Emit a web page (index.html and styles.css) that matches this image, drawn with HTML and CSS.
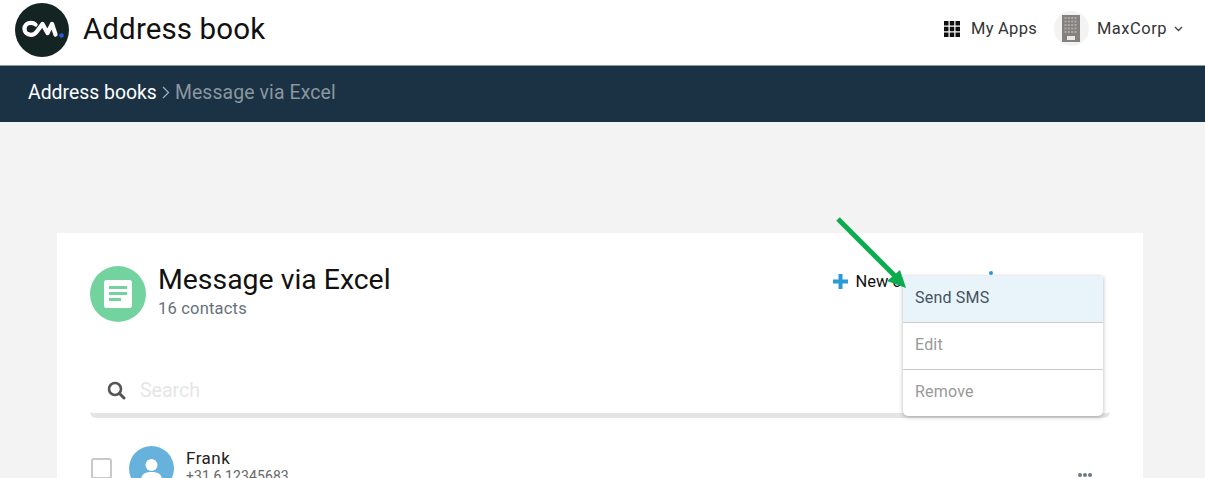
FILE: index.html
```html
<!DOCTYPE html>
<html>
<head>
    <meta charset="UTF-8">
    <title>Address book</title>
    <link rel="stylesheet" href="styles.css">
</head>
<body>
    <header class="topbar">
        <div class="brand">
            <svg class="logo" width="54" height="54" viewBox="0 0 54 54" role="img" aria-label="CM">
                <circle cx="27" cy="27" r="27" fill="#142423"/>
                <path fill="none" stroke="#fff" stroke-width="4.300" stroke-linecap="round" stroke-linejoin="round" d="M20.500 21.500C19 20.200 17.800 19.800 16 19.800 12 19.800 9.500 22.500 9.500 25.800S12 31.800 16 31.800C18 31.800 20 31 21.500 29L27.500 21 32.500 30 37 21 40.500 31.500"/>
                <circle cx="46.500" cy="32.500" r="2.300" fill="#2a5bd7"/>
            </svg>
            <h1 class="app_name">Address book</h1>
        </div>
        <div class="top_right">
            <a class="apps" href="#">
                <svg class="apps_icon" width="16" height="16" viewBox="0 0 16 16">
                    <path fill="#111" d="M0 0h4.500v4.500H0zM5.750 0h4.500v4.500h-4.500zM11.500 0H16v4.500h-4.500zM0 5.750h4.500v4.500H0zM5.750 5.750h4.500v4.500h-4.500zM11.500 5.750H16v4.500h-4.500zM0 11.500h4.500V16H0zM5.750 11.500h4.500V16h-4.500zM11.500 11.500H16V16h-4.500z"/>
                </svg>
                My Apps
            </a>
            <div class="account">
                <div class="account_pic">
                    <svg width="18" height="27" viewBox="0 0 18 27">
                        <rect width="18" height="27" fill="#85817e"/>
                        <path stroke="#aeaba9" stroke-width="2" stroke-dasharray="2 1.330" d="M2.500 3h13M2.500 6.500h13M2.500 10h13M2.500 13.500h13M2.500 17h13"/>
                        <rect x="5" y="21" width="8" height="4" fill="#e8e8e8"/>
                    </svg>
                </div>
                <span>MaxCorp</span>
                <svg class="caret" width="9" height="6" viewBox="0 0 9 6">
                    <path fill="none" stroke="#444" stroke-width="1.400" d="M1 1l3.500 3.500L8 1"/>
                </svg>
            </div>
        </div>
    </header>

    <nav class="crumbs">
        <a href="#">Address books</a>
        <svg class="crumb_sep" width="8" height="13" viewBox="0 0 8 13">
            <path fill="none" stroke="#a3adb4" stroke-width="1.300" d="M1 1l5.500 5.500L1 12"/>
        </svg>
        <span>Message via Excel</span>
    </nav>

    <main class="page">
        <section class="card">
            <div class="card_head">
                <div class="list_icon">
                    <svg width="28" height="28" viewBox="0 0 28 28">
                        <rect width="28" height="28" rx="2.500" fill="#fff"/>
                        <path fill="#72d39e" d="M5 6h18v3H5zM5 12h18v3H5zM5 18h12v3H5z"/>
                    </svg>
                </div>
                <div class="list_title">
                    <h2>Message via Excel</h2>
                    <p>16 contacts</p>
                </div>
                <div class="card_actions">
                    <a class="new_btn" href="#">
                        <svg width="15" height="15" viewBox="0 0 15 15">
                            <path fill="#2b9ad9" d="M5.500 0h4v5.500H15v4H9.500V15h-4V9.500H0v-4h5.500z"/>
                        </svg>
                        New contact
                    </a>
                    <span class="more_dot"></span>
                </div>
            </div>

            <div class="search">
                <svg width="19" height="19" viewBox="0 0 19 19">
                    <circle cx="8" cy="8" r="6" fill="none" stroke="#555" stroke-width="2.600"/>
                    <path stroke="#555" stroke-width="3" stroke-linecap="round" d="M12.500 12.500l4.500 4.500"/>
                </svg>
                <span class="placeholder">Search</span>
            </div>

            <div class="contact">
                <span class="check"></span>
                <div class="avatar">
                    <svg width="45" height="45" viewBox="0 0 45 45">
                        <circle cx="22.500" cy="19" r="6" fill="#fff"/>
                        <path fill="#fff" d="M12 35c0-7 4-9 10.500-9S33 28 33 35z"/>
                    </svg>
                </div>
                <div class="contact_info">
                    <div class="contact_name">Frank</div>
                    <div class="contact_phone">+31 6 12345683</div>
                </div>
                <div class="dots"><i></i><i></i><i></i></div>
            </div>
        </section>
    </main>

    <ul class="menu">
        <li class="active">Send SMS</li>
        <li>Edit</li>
        <li>Remove</li>
    </ul>

    <svg class="arrow" width="80" height="80" viewBox="0 0 80 80">
        <path fill="none" stroke="#0bab4f" stroke-width="5" d="M4 4l58 58"/>
        <path fill="#0bab4f" d="M72 73L66 55 53 66z"/>
    </svg>
</body>
</html>
```

FILE: styles.css
```css
* {
    box-sizing: border-box;
}
html, body {
    height: 478px;
    overflow: hidden;
}
body {
    margin: 0;
    background: #f3f3f3;
    font-family: Roboto, "Liberation Sans", sans-serif;
    color: #111;
}
a {
    color: inherit;
    text-decoration: none;
}

/* top bar */
.topbar {
    height: 66px;
    background: #fff;
    border-bottom: 1px solid #8d979e;
    display: flex;
    justify-content: space-between;
    align-items: center;
    padding: 0 22px 8px 15px;
}
.brand {
    display: flex;
    align-items: center;
    gap: 14px;
    margin-top: 2px;
}
.logo {
    display: block;
}
.app_name {
    margin: 0 0 1px;
    font-size: 29.500px;
    font-weight: 400;
    letter-spacing: 0.12px;
}
.top_right {
    display: flex;
    align-items: center;
    font-size: 16.500px;
    letter-spacing: 0.5px;
    color: #333;
}
.apps {
    display: flex;
    align-items: center;
    gap: 11px;
    margin-right: 17px;
    letter-spacing: 0.25px;
}
.account {
    display: flex;
    align-items: center;
}
.account_pic {
    width: 35px;
    height: 35px;
    border-radius: 50%;
    background: #f3f3f3;
    display: flex;
    align-items: center;
    justify-content: center;
    margin-right: 8px;
}
.caret {
    margin-left: 7px;
}

/* breadcrumb */
.crumbs {
    height: 56px;
    background: #1a3244;
    color: #fff;
    display: flex;
    align-items: center;
    padding: 0 0 4px 28px;
    font-size: 19.400px;
}
.crumb_sep {
    margin: 0 5px;
}
.crumbs span {
    color: #8b979f;
    letter-spacing: 0.12px;
}

/* card */
.page {
    padding: 111px 62px 0 57px;
}
.card {
    background: #fff;
    height: 300px;
    padding: 33px 33px 0;
}
.card_head {
    display: flex;
    align-items: flex-start;
    height: 99px;
}
.list_icon {
    width: 56px;
    height: 56px;
    border-radius: 50%;
    background: #72d39e;
    display: flex;
    align-items: center;
    justify-content: center;
    margin-right: 12px;
}
.list_title h2 {
    margin: -3px 0 0;
    font-size: 28.400px;
    font-weight: 400;
}
.list_title p {
    margin: 3px 0 0;
    font-size: 16.500px;
    letter-spacing: 0.2px;
    color: #66707a;
}
.card_actions {
    margin-left: auto;
    margin-right: 117px;
    display: flex;
}
.new_btn {
    display: flex;
    align-items: center;
    gap: 7px;
    font-size: 16.500px;
    margin: 6px 41px 0 -1px;
}
.more_dot {
    width: 4px;
    height: 4px;
    border-radius: 50%;
    background: #2b9ad9;
    margin-top: 5px;
}
.search {
    height: 53px;
    border-bottom: 5px solid #e5e5e5;
    border-radius: 0 0 6px 6px;
    display: flex;
    align-items: center;
    gap: 14px;
    padding: 2px 0 0 17px;
}
.placeholder {
    font-size: 19.500px;
    color: #e6e6e6;
}
.contact {
    display: flex;
    align-items: flex-start;
    padding-top: 28px;
}
.check {
    width: 21px;
    height: 21px;
    border: 2px solid #c9c9c9;
    border-radius: 3px;
    margin: 12px 17px 0 1px;
}
.avatar {
    width: 45px;
    height: 45px;
    border-radius: 50%;
    background: #67b2dc;
    margin-right: 12px;
}
.contact_info {
    margin-top: 2px;
}
.contact_name {
    font-size: 17px;
    letter-spacing: 0.5px;
    color: #222;
}
.contact_phone {
    font-size: 14px;
    letter-spacing: 0.1px;
    color: #666;
}
.dots {
    margin-left: auto;
    margin-right: 18px;
    margin-top: 27px;
    display: flex;
    gap: 1px;
}
.dots i {
    width: 4px;
    height: 4px;
    border-radius: 50%;
    background: #6d7a86;
}

/* dropdown over the card */
.menu {
    position: absolute;
    left: 903px;
    top: 276px;
    width: 200px;
    height: 140px;
    margin: 0;
    padding: 0;
    list-style: none;
    background: #fff;
    border-radius: 0 0 5px 5px;
    box-shadow: 0 1px 4px rgba(0, 0, 0, 0.3);
    font-size: 16px;
    letter-spacing: 0.2px;
    color: #999;
}
.menu li {
    height: 47px;
    padding: 12px 12px 0;
    border-bottom: 1px solid #ccc;
}
.menu li:last-child {
    border-bottom: 0;
    height: 46px;
}
.menu .active {
    background: #e8f3fa;
    color: #45525e;
}
.arrow {
    position: absolute;
    left: 834px;
    top: 215px;
}
```
